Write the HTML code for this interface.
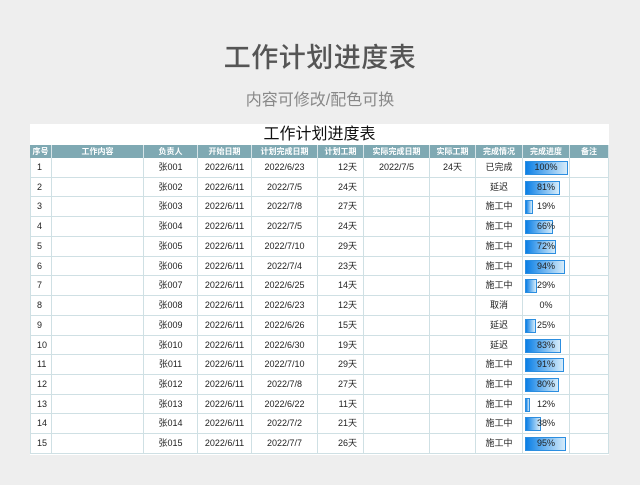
<!DOCTYPE html>
<html><head><meta charset="utf-8"><style>
body{margin:0;width:640px;height:485px;background:#eeeeee;font-family:"Liberation Sans","Noto Sans CJK SC",sans-serif;position:relative;overflow:hidden}
.t1{position:absolute;left:0;width:640px;top:36px;text-align:center;font-size:27px;color:#555;letter-spacing:0.5px;font-weight:500}
.t2{position:absolute;left:0;width:640px;top:86px;text-align:center;font-size:16px;color:#888}
.box{position:absolute;left:30px;top:124px;width:579px;height:331px;background:#fff}
.cap{position:absolute;left:0;top:0;width:579px;height:21px;text-align:center;font-size:16px;color:#111;line-height:21px}
</style></head><body>
<div class="t1">工作计划进度表</div>
<div class="t2">内容可修改/配色可换</div>
<div class="box"><div class="cap">工作计划进度表</div></div>
<div id="tb" style="position:absolute;left:30px;top:145px"></div>
<script>
(function(){
var w=[22,92,54,54,66,46,66,46,47,47,39];
var h=["序号","工作内容","负责人","开始日期","计划完成日期","计划工期","实际完成日期","实际工期","完成情况","完成进度","备注"];
var d=[["2022/6/23","12天","2022/7/5","24天","已完成",100],["2022/7/5","24天","","","延迟",81],["2022/7/8","27天","","","施工中",19],["2022/7/5","24天","","","施工中",66],["2022/7/10","29天","","","施工中",72],["2022/7/4","23天","","","施工中",94],["2022/6/25","14天","","","施工中",29],["2022/6/23","12天","","","取消",0],["2022/6/26","15天","","","延迟",25],["2022/6/30","19天","","","延迟",83],["2022/7/10","29天","","","施工中",91],["2022/7/8","27天","","","施工中",80],["2022/6/22","11天","","","施工中",12],["2022/7/2","21天","","","施工中",38],["2022/7/7","26天","","","施工中",95]];
var s='<div style="position:relative;width:579px;height:310px;font-size:9px;color:#222">';
var x=0,i,r;
for(i=0;i<11;i++){s+='<div style="position:absolute;left:'+x+'px;top:0;width:'+w[i]+'px;height:13px;background:#7fa9b3;color:#fff;text-align:center;line-height:13px;font-size:8px;font-weight:bold;border-right:1px solid #d6e4e8;box-sizing:border-box">'+h[i]+'</div>';x+=w[i];}
for(r=0;r<15;r++){var ty=13+r*19.73;var v=d[r];var c=[r+1,"","张0"+(r+1<10?"0":"")+(r+1),"2022/6/11",v[0],v[1],v[2],v[3],v[4],"",""];x=0;
for(i=0;i<11;i++){var al=(i==0)?'left;padding-left:6px':(i==5?'right;padding-right:6px':'center');
var inner=c[i];
if(i==9){var p=v[5];inner=(p>0?'<div style="position:absolute;left:2px;top:3px;height:14px;width:'+(p*0.43)+'px;border:1px solid #2b8ee0;box-sizing:border-box;background:linear-gradient(90deg,#0a7fe6,#d6ecfa)"></div>':'')+'<span style="position:relative">'+p+'%</span>';}
s+='<div style="position:absolute;left:'+x+'px;top:'+ty+'px;width:'+w[i]+'px;height:19.73px;line-height:19px;border-right:1px solid #cfe0e4;border-bottom:1px solid #cfe0e4;box-sizing:border-box;text-align:'+al+';'+(i==0?'border-left:1px solid #cfe0e4':'')+'">'+inner+'</div>';x+=w[i];}}
s+='</div>';document.getElementById('tb').innerHTML=s;
})();
</script>
</body></html>
